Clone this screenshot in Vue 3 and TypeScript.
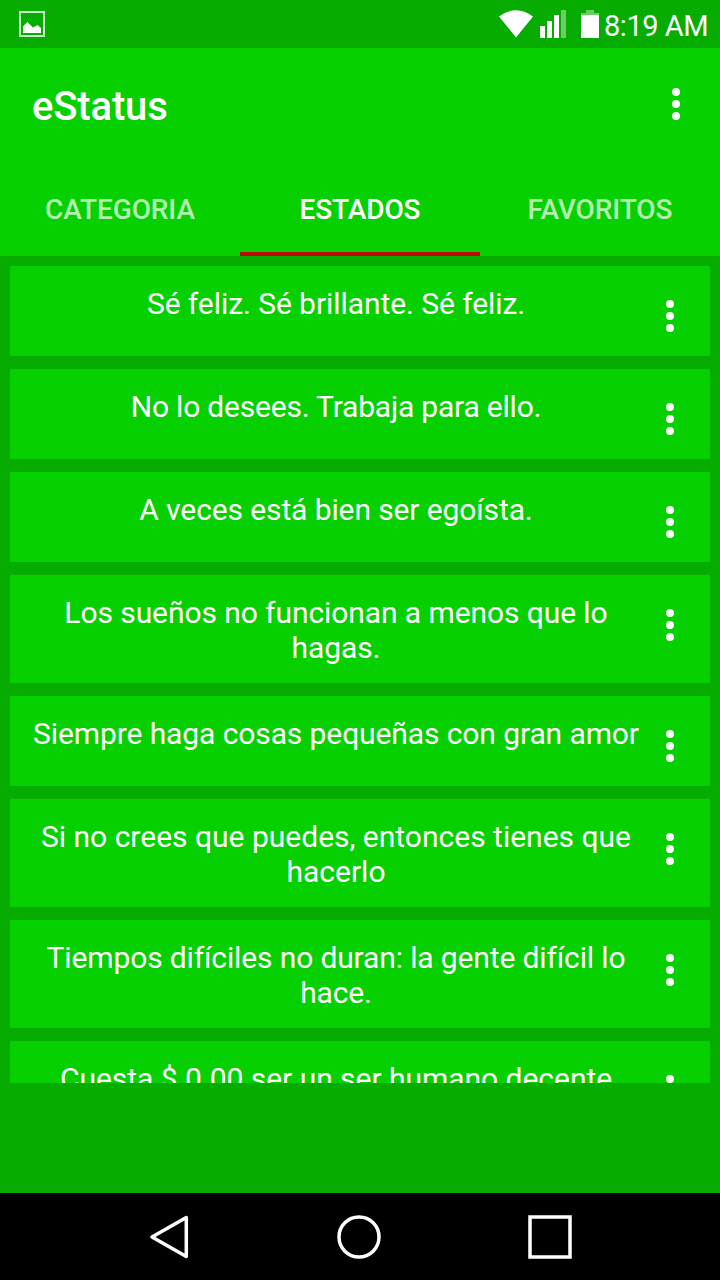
<script setup lang="ts">
interface Status {
  id: number
  text: string
  tracking: number
}

const tabs: string[] = ['CATEGORIA', 'ESTADOS', 'FAVORITOS']
const activeTab = 'ESTADOS'

const statuses: Status[] = [
  { id: 1, text: 'Sé feliz. Sé brillante. Sé feliz.', tracking: -0.07 },
  { id: 2, text: 'No lo desees. Trabaja para ello.', tracking: -0.2 },
  { id: 3, text: 'A veces está bien ser egoísta.', tracking: -0.11 },
  { id: 4, text: 'Los sueños no funcionan a menos que lo\nhagas.', tracking: -0.08 },
  { id: 5, text: 'Siempre haga cosas pequeñas con gran amor', tracking: -0.1 },
  { id: 6, text: 'Si no crees que puedes, entonces tienes que\nhacerlo', tracking: 0 },
  { id: 7, text: 'Tiempos difíciles no duran: la gente difícil lo\nhace.', tracking: -0.13 },
  { id: 8, text: 'Cuesta $ 0.00 ser un ser humano decente', tracking: -0.03 },
]
</script>

<template>
  <div class="screen">
    <div class="status-bar">
      <svg class="picture" width="26" height="26" viewBox="0 0 26 26">
        <rect x="1" y="1" width="24" height="24" fill="none" stroke="#c4f0c2" stroke-width="2" />
        <path d="M4 22V15.500L8.300 11L14 16.500L18.500 14L22 17V22Z" fill="#fff" />
      </svg>
      <div class="indicators">
        <svg class="wifi" width="36" height="28" viewBox="0 0 36 28">
          <path d="M1 6.500Q18-6 35 6.500L18 27.500Z" fill="#fff" />
        </svg>
        <svg class="signal" width="26" height="28" viewBox="0 0 26 28">
          <path d="M0 16h5v12H0zM7 11h5v17H7zM14 5h5v23h-5z" fill="#fff" />
          <path d="M21 0h5v28h-5z" fill="#fff" fill-opacity=".4" />
        </svg>
        <svg class="battery" width="18" height="28" viewBox="0 0 18 28">
          <path d="M5 0h8v3h5v2H0V3h5z" fill="#fff" fill-opacity=".4" />
          <path d="M0 5h18v23H0z" fill="#fff" />
        </svg>
        <span class="clock">8:19 AM</span>
      </div>
    </div>

    <header class="toolbar">
      <h1 class="title">eStatus</h1>
      <button class="more" aria-label="Menú">
        <i></i><i></i><i></i>
      </button>
    </header>

    <nav class="tabs">
      <div v-for="tab in tabs" :key="tab" class="tab" :class="{ active: tab === activeTab }">
        {{ tab }}
      </div>
    </nav>

    <main class="list">
      <article v-for="item in statuses" :key="item.id" class="card">
        <p class="text" :style="{ letterSpacing: item.tracking + 'px' }">{{ item.text }}</p>
        <button class="more" aria-label="Opciones">
          <i></i><i></i><i></i>
        </button>
      </article>
    </main>

    <div class="spacer"></div>

    <footer class="nav-bar">
      <svg width="720" height="87" viewBox="0 0 720 87" fill="none" stroke="#fff" stroke-width="3.500">
        <path d="M152 44L186.300 24.500V63.500Z" stroke-linejoin="round" />
        <circle cx="359" cy="44" r="20" />
        <rect x="530" y="24" width="40" height="40" />
      </svg>
    </footer>
  </div>
</template>

<style>
body {
  margin: 0;
}
</style>

<style scoped>
.screen {
  width: 720px;
  height: 1280px;
  display: flex;
  flex-direction: column;
  overflow: hidden;
  background: #06ad00;
  color: #fff;
  font-family: Roboto, "Noto Sans", sans-serif;
}

.status-bar {
  flex: none;
  height: 48px;
  box-sizing: border-box;
  padding: 0 12px 0 19px;
  display: flex;
  align-items: center;
  justify-content: space-between;
}

.indicators {
  display: flex;
  align-items: center;
}

.wifi {
  margin-right: 6px;
}

.signal {
  margin-right: 15px;
}

.battery {
  margin-right: 5px;
}

.clock {
  width: 104px;
  font-size: 29px;
  line-height: 48px;
  padding-top: 3px;
  letter-spacing: -0.45px;
  white-space: nowrap;
}

.toolbar {
  flex: none;
  height: 112px;
  box-sizing: border-box;
  padding: 0 38px 0 32px;
  display: flex;
  align-items: center;
  justify-content: space-between;
  background: #06d000;
}

.title {
  margin: 0;
  padding-top: 6px;
  font-size: 40px;
  font-weight: 500;
  line-height: 48px;
  letter-spacing: -0.15px;
}

.more {
  flex: none;
  width: 12px;
  height: 32px;
  padding: 0;
  border: 0;
  background: none;
  display: flex;
  flex-direction: column;
  align-items: center;
  gap: 4px;
}

.more i {
  width: 8px;
  height: 8px;
  border-radius: 50%;
  background: #fff;
}

.tabs {
  flex: none;
  height: 96px;
  display: grid;
  grid-template-columns: repeat(3, 1fr);
  background: #06d000;
}

.tab {
  box-sizing: border-box;
  padding-top: 8px;
  border-bottom: 4px solid transparent;
  font-size: 28px;
  font-weight: 500;
  line-height: 84px;
  letter-spacing: -0.1px;
  text-align: center;
  color: rgba(255, 255, 255, 0.7);
}

.tab.active {
  color: #fff;
  border-bottom-color: #bd0a00;
}

.list {
  flex: none;
  height: 827px;
  box-sizing: border-box;
  padding: 10px 10px 0;
  display: flex;
  flex-direction: column;
  gap: 13px;
  overflow: hidden;
}

.card {
  flex: none;
  min-height: 90px;
  box-sizing: border-box;
  padding: 20px 34px 18px 16px;
  display: flex;
  align-items: flex-start;
  justify-content: space-between;
  background: #06d000;
}

.text {
  margin: 0;
  width: 620px;
  font-size: 30px;
  line-height: 35px;
  text-align: center;
  white-space: pre;
}

.card .more {
  margin-top: 14px;
}

.spacer {
  flex: 1;
}

.nav-bar {
  flex: none;
  height: 87px;
  background: #000;
}

.nav-bar svg {
  display: block;
}
</style>
